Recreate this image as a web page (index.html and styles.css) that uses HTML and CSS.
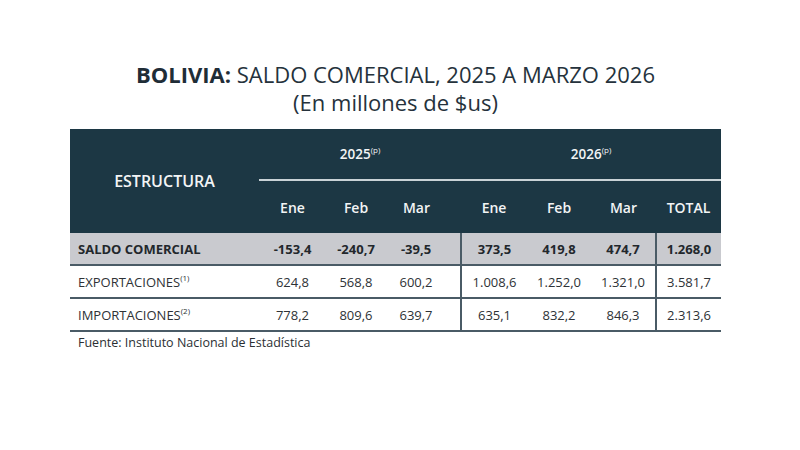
FILE: index.html
```html
<!DOCTYPE html>
<html lang="es">
<head>
<meta charset="utf-8">
<title>Bolivia: Saldo comercial</title>
<link rel="stylesheet" href="styles.css">
</head>
<body>
<div class="page">
  <header class="heading">
    <h1 class="title"><b>BOLIVIA:</b> SALDO COMERCIAL, 2025 A MARZO 2026</h1>
    <p class="subtitle">(En millones de $us)</p>
  </header>
  <table class="data">
    <colgroup>
      <col class="w-label">
      <col class="w-a"><col class="w-b"><col class="w-c">
      <col class="w-d"><col class="w-e"><col class="w-f">
      <col class="w-t">
    </colgroup>
    <thead>
      <tr class="hrow1">
        <th rowspan="2" class="h-label">ESTRUCTURA</th>
        <th colspan="3" class="h-year">2025<sup>(p)</sup></th>
        <th colspan="4" class="h-year">2026<sup>(p)</sup></th>
      </tr>
      <tr class="hrow2">
        <th>Ene</th><th>Feb</th><th class="c-mar">Mar</th>
        <th>Ene</th><th>Feb</th><th>Mar</th><th>TOTAL</th>
      </tr>
    </thead>
    <tbody>
      <tr class="row-saldo">
        <td class="lbl">SALDO COMERCIAL</td>
        <td>-153,4</td><td>-240,7</td><td class="c-mar sep">-39,5</td>
        <td>373,5</td><td>419,8</td><td class="sep">474,7</td><td>1.268,0</td>
      </tr>
      <tr>
        <td class="lbl">EXPORTACIONES<sup>(1)</sup></td>
        <td>624,8</td><td>568,8</td><td class="c-mar sep">600,2</td>
        <td>1.008,6</td><td>1.252,0</td><td class="sep">1.321,0</td><td>3.581,7</td>
      </tr>
      <tr>
        <td class="lbl">IMPORTACIONES<sup>(2)</sup></td>
        <td>778,2</td><td>809,6</td><td class="c-mar sep">639,7</td>
        <td>635,1</td><td>832,2</td><td class="sep">846,3</td><td>2.313,6</td>
      </tr>
    </tbody>
  </table>
  <p class="source">Fuente: Instituto Nacional de Estadística</p>
</div>
</body>
</html>
```
FILE: styles.css
```css
html, body {
  margin: 0;
  padding: 0;
  background: #ffffff;
}
body {
  font-family: "Open Sans", "Noto Sans", sans-serif;
  font-stretch: 92%;
  color: #2b2f33;
  width: 800px;
  height: 450px;
  overflow: hidden;
}
.page {
  padding: 60px 0 0 70px;
}
.heading {
  width: 651px;
  text-align: center;
  color: #25323c;
}
.title {
  margin: 0;
  font-size: 22px;
  font-weight: 400;
  line-height: 28px;
  font-stretch: 90%;
}
.title b {
  font-weight: 700;
  color: #1f2d37;
}
.subtitle {
  margin: 0;
  font-size: 22px;
  line-height: 28px;
  font-stretch: 90%;
}
.data {
  margin-top: 13px;
  border-collapse: collapse;
  table-layout: fixed;
  width: 651px;
  font-size: 13px;
}
.w-label { width: 189px; }
.w-a { width: 67px; }
.w-b { width: 60px; }
.w-c { width: 75px; }
.w-d { width: 66px; }
.w-e { width: 64px; }
.w-f { width: 65px; }
.w-t { width: 65px; }

thead th {
  background: #1c3744;
  color: #f2f4f5;
  font-weight: 600;
  font-size: 14px;
  padding: 0;
  text-align: center;
}
.hrow1 th { height: 50px; }
.hrow2 th { height: 52px; border-top: 2px solid #c9d2d6; }
.h-year { border-bottom: 2px solid #c9d2d6; font-size: 13.5px; }
.h-label { vertical-align: middle; text-align: center; font-size: 16px; }
th sup, td sup {
  font-size: 8px;
  font-weight: 400;
  vertical-align: 6px;
  line-height: 0;
}

tbody td {
  text-align: center;
  padding: 0;
  height: 31px;
  border-bottom: 2px solid #4a5b66;
  color: #2e3236;
}
tbody td.lbl {
  text-align: left;
  padding-left: 8px;
}
.c-mar { padding-right: 14px !important; }
.sep { border-right: 2px solid #4a5b66; }
.row-saldo td {
  background: #c9cacf;
  font-weight: 700;
  color: #22272c;
}
.source {
  margin: 2px 0 0 8px;
  font-size: 12.5px;
  color: #2b2f33;
}
```
